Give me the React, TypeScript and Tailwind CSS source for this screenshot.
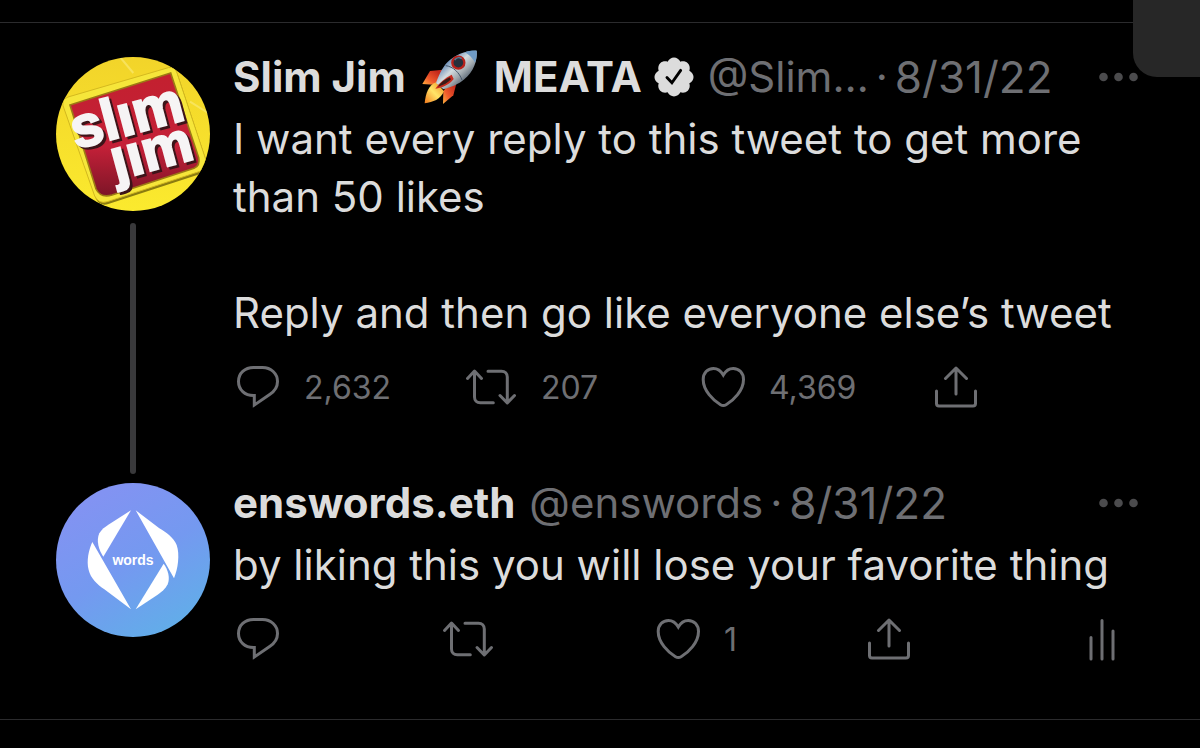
import React from 'react';

type IconProps = { className?: string };

const strokeProps = {
  fill: 'none',
  stroke: 'currentColor',
  strokeWidth: 3,
  strokeLinecap: 'round' as const,
  strokeLinejoin: 'round' as const,
};

const ReplyIcon: React.FC = () => (
  <svg width="44" height="44" viewBox="0 0 44 44" {...strokeProps} strokeLinejoin="miter" aria-hidden="true">
    <path d="M17.500 1.500h9c8.500 0 15 6 15 14 0 5.500-2.700 9.500-7.500 12.700L18.300 39V29.500h-.8C8.800 29.500 2.500 23.700 2.500 15.500S8.800 1.500 17.500 1.500z" />
  </svg>
);

const RetweetIcon: React.FC = () => (
  <svg width="52" height="44" viewBox="0 0 52 44" {...strokeProps} aria-hidden="true">
    <path d="M2.500 12.500 9.500 5l7 7.500M9.500 5.500V31c0 3.500 2.300 5.800 5.800 5.800h13M23 5.200h13.500c3.500 0 5.800 2.300 5.800 5.800v25.500M35 29.500l7.300 7.500 7.200-7.500" />
  </svg>
);

const HeartIcon: React.FC = () => (
  <svg width="44" height="44" viewBox="0 0 44 44" {...strokeProps} strokeLinejoin="miter" aria-hidden="true">
    <path d="M22.300 9C20 5 16.500 2.400 12.500 2.400 6.500 2.400 2.200 7 2.200 13.500c0 11 10 21 17.300 25.200 2 1.100 3.600 1.100 5.600 0 7.400-4.200 17.400-14.200 17.400-25.200 0-6.500-4.300-11.100-10.300-11.100-4 0-7.600 2.600-9.900 6.600z" />
  </svg>
);

const ShareIcon: React.FC = () => (
  <svg width="44" height="44" viewBox="0 0 44 44" {...strokeProps} aria-hidden="true">
    <path d="M22 2v26M11.500 12.500 22 2l10.500 10.500M2.500 25v12.500c0 1.500 1 2.500 2.500 2.500h34c1.500 0 2.500-1 2.500-2.500V25" />
  </svg>
);

const AnalyticsIcon: React.FC = () => (
  <svg width="28" height="44" viewBox="0 0 28 44" {...strokeProps} aria-hidden="true">
    <path d="M3 19.500V41M14 2.500V41M25 13v28" />
  </svg>
);

const MoreIcon: React.FC = () => (
  <svg width="40" height="10" viewBox="0 0 40 10" fill="currentColor" aria-hidden="true">
    <circle cx="5.500" cy="5" r="4.300" />
    <circle cx="20.500" cy="5" r="4.300" />
    <circle cx="35.500" cy="5" r="4.300" />
  </svg>
);

const VerifiedBadge: React.FC<IconProps> = ({ className }) => (
  <svg className={className} width="40" height="40" viewBox="1.500 1.500 21 21" role="img" aria-label="Verified">
    <path
      fill="currentColor"
      d="M22.250 12c0-1.430-.88-2.670-2.190-3.340.46-1.390.2-2.900-.81-3.910s-2.520-1.270-3.910-.81c-.66-1.310-1.910-2.190-3.340-2.190s-2.670.88-3.330 2.190c-1.400-.46-2.910-.2-3.920.81s-1.260 2.520-.8 3.910c-1.310.67-2.200 1.910-2.200 3.340s.89 2.670 2.200 3.340c-.46 1.390-.21 2.900.8 3.910s2.520 1.260 3.910.81c.67 1.310 1.910 2.190 3.340 2.190s2.680-.88 3.340-2.190c1.390.45 2.900.2 3.910-.81s1.270-2.520.81-3.910c1.310-.67 2.190-1.910 2.190-3.340z"
    />
    <path d="m8.300 12.300 2.600 2.700 4.600-6.500" fill="none" stroke="#000" strokeWidth="1.500" strokeLinecap="round" />
  </svg>
);

const Rocket: React.FC<IconProps> = ({ className }) => (
  <svg className={className} width="56" height="54" viewBox="30 15 168 162" role="img" aria-label="Rocket">
    <defs>
      <linearGradient id="hull" x1="0" y1="0" x2="1" y2="1">
        <stop offset="0.200" stopColor="#3f6da8" />
        <stop offset="0.450" stopColor="#d3dcdf" />
        <stop offset="0.600" stopColor="#a3abb0" />
        <stop offset="0.850" stopColor="#28384c" />
      </linearGradient>
      <linearGradient id="fin" x1="1" y1="0" x2="0" y2="1">
        <stop offset="0.200" stopColor="#c3281b" />
        <stop offset="0.650" stopColor="#ef5a2c" />
        <stop offset="1" stopColor="#ffb13d" />
      </linearGradient>
      <linearGradient id="flame" x1="1" y1="0" x2="0" y2="1">
        <stop offset="0" stopColor="#f08a1c" />
        <stop offset="0.500" stopColor="#ffe568" />
        <stop offset="1" stopColor="#f37a1b" />
      </linearGradient>
    </defs>
    <path d="M93 74 54 78 31 117l34 2 22-18z" fill="url(#fin)" />
    <path d="M136 105 124 151l-31 26 1-38 17-25z" fill="url(#fin)" />
    <path d="M72 112c-22 9-31 32-34 63 25-3 48-12 58-36z" fill="url(#flame)" />
    <path d="M194 17c-34-1-65 12-88 35-17 18-27 44-34 62l22 19c22-6 46-15 63-30 28-24 40-56 37-86z" fill="url(#hull)" />
    <path d="M194 17c-13-1-25 1-36 5 11 5 24 17 31 31 5-12 6-24 5-36z" fill="#6f9bc5" />
    <path d="M101 62c22 2 42 22 49 43" fill="none" stroke="#46566a" strokeWidth="3" />
    <circle cx="139" cy="53" r="18" fill="#26303c" stroke="#b7221b" strokeWidth="7" />
    <path d="M128 45c5-7 14-9 21-4" fill="none" stroke="#587996" strokeWidth="4" />
    <path d="M119 89c-20 10-36 23-49 42 21-3 43-12 55-29z" fill="#c72b1e" />
    <path d="M113 97c-16 7-27 16-35 28 16-4 31-12 39-22z" fill="#3a1b18" />
  </svg>
);

const SlimJimAvatar: React.FC = () => (
  <svg className="size-[154px] shrink-0" viewBox="48 36 462 462" role="img" aria-label="Slim Jim avatar">
    <defs>
      <clipPath id="sjClip">
        <circle cx="279" cy="267" r="231" />
      </clipPath>
      <linearGradient id="sjYellow" x1="0" y1="0" x2="0" y2="1">
        <stop offset="0" stopColor="#f2d42a" />
        <stop offset="1" stopColor="#fbea2e" />
      </linearGradient>
      <linearGradient id="sjRed" x1="0" y1="0" x2="0" y2="1">
        <stop offset="0" stopColor="#c3202f" />
        <stop offset="0.600" stopColor="#c42038" />
        <stop offset="1" stopColor="#7d1527" />
      </linearGradient>
    </defs>
    <g clipPath="url(#sjClip)">
      <rect x="48" y="36" width="462" height="462" fill="url(#sjYellow)" />
      <path d="M240 36 280 84M450 170l80 50" stroke="#fbef8c" strokeWidth="6" opacity="0.500" />
      <path d="M84 156 385 68q20-4 26 16l87 262q6 24-18 33L202 470q-26 8-38-17L69 182q-4-19 15-26z" fill="#8b7c10" transform="translate(3 7)" />
      <path d="M84 156 385 68q20-4 26 16l87 262q6 24-18 33L202 470q-26 8-38-17L69 182q-4-19 15-26z" fill="#f6e63a" stroke="#d4b91f" strokeWidth="3" />
      <path d="M90 180 392 84l84 254q5 24-14 32L216 450q-34 10-48-18z" fill="url(#sjRed)" stroke="#9c7a14" strokeWidth="5" />
    </g>
    <g fontFamily="'Liberation Sans', sans-serif" fontWeight="700" fontSize="172" strokeWidth="7">
      <g fill="#3d1419" stroke="#3d1419" transform="translate(8 7)">
        <text transform="translate(108 312) rotate(-15)">slım</text>
        <text transform="translate(228 405) rotate(-15)">ȷım</text>
      </g>
      <g fill="#f6f4f5" stroke="#f6f4f5">
        <text transform="translate(108 312) rotate(-15)">slım</text>
        <text transform="translate(228 405) rotate(-15)">ȷım</text>
      </g>
    </g>
  </svg>
);

const EnsAvatar: React.FC = () => (
  <svg className="size-[154px] shrink-0" viewBox="48 40 462 462" role="img" aria-label="enswords.eth avatar">
    <defs>
      <linearGradient id="ens" x1="0.250" y1="0.100" x2="0.750" y2="0.950">
        <stop offset="0" stopColor="#8293f2" />
        <stop offset="0.500" stopColor="#7499f0" />
        <stop offset="1" stopColor="#62ade9" />
      </linearGradient>
    </defs>
    <circle cx="279" cy="271" r="231" fill="url(#ens)" />
    <g fill="#fff">
      <path d="M273 122 190 261c-14-20-22-48-12-70 6-12 18-20 27-26z" />
      <path d="M287 122 402 326c12-28 18-72 8-100-9-22-32-38-52-50z" />
      <path d="M287 419 371 282c13 18 20 42 12 62-7 15-18 23-30 31z" />
      <path d="M273 419 157 217c-11 24-18 56-11 84 6 25 26 44 47 58z" />
      <text x="279" y="286" textAnchor="middle" fontFamily="'Liberation Sans', sans-serif" fontWeight="700" fontSize="42">
        words
      </text>
    </g>
  </svg>
);

interface ActionProps {
  label: string;
  count?: string;
  children: React.ReactNode;
}

const Action: React.FC<ActionProps> = ({ label, count, children }) => (
  <button type="button" aria-label={label} className="flex items-center gap-6 text-left">
    {children}
    {count && <span className="text-[32px] leading-[44px]">{count}</span>}
  </button>
);

interface TweetProps {
  avatar: React.ReactNode;
  name: React.ReactNode;
  handle: string;
  date: string;
  threaded?: boolean;
  children: React.ReactNode;
}

const Tweet: React.FC<TweetProps> = ({ avatar, name, handle, date, threaded, children }) => (
  <article className="flex gap-[23px]">
    <div className="flex shrink-0 flex-col items-center gap-3 pt-[9px]">
      {avatar}
      {threaded && <div className="w-1.5 flex-1 rounded-full bg-[#39393b]" />}
    </div>
    <div className={threaded ? 'min-w-0 flex-1 pb-16' : 'min-w-0 flex-1'}>
      <header className="flex items-center justify-between text-[42px] leading-[58px]">
        <div className="flex items-center gap-3.5 whitespace-nowrap text-[#6e6f73]">
          <h2 className="flex items-center font-bold text-[#dcdcdc]">{name}</h2>
          <div className="flex items-center gap-[7px]">
            <span>{handle}</span>
            <span>·</span>
            <time className="text-[44px]">{date}</time>
          </div>
        </div>
        <button type="button" aria-label="More" className="text-[#4b4b4d]">
          <MoreIcon />
        </button>
      </header>
      {children}
    </div>
  </article>
);

const App: React.FC = () => {
  return (
    <main className="relative min-h-screen overflow-hidden bg-black pt-[22px] font-['Inter',sans-serif]">
      <div className="absolute top-0 right-0 h-[77px] w-[67px] rounded-bl-3xl bg-[#272727]" />

      <section className="border-y border-[#2b2b2d] pt-[25px] pr-[62px] pb-[57px] pl-14">
        <Tweet
          threaded
          avatar={<SlimJimAvatar />}
          name={
            <>
              Slim Jim
              <Rocket className="mx-4" />
              MEATA
              <VerifiedBadge className="ml-3" />
            </>
          }
          handle="@Slim…"
          date="8/31/22"
        >
          <p className="mt-1 text-[42px] leading-[58px] whitespace-pre-line text-[#dcdcdc]">
            {'I want every reply to this tweet to get more than 50 likes\n\nReply and then go like everyone else’s tweet'}
          </p>
          <div className="mt-6 grid grid-cols-[229fr_236fr_233fr_204fr] pl-[3px] text-[#6e6f73]">
            <Action label="Reply" count="2,632"><ReplyIcon /></Action>
            <Action label="Retweet" count="207"><RetweetIcon /></Action>
            <Action label="Like" count="4,369"><HeartIcon /></Action>
            <Action label="Share"><ShareIcon /></Action>
          </div>
        </Tweet>

        <Tweet avatar={<EnsAvatar />} name="enswords.eth" handle="@enswords" date="8/31/22">
          <p className="mt-1 text-[42px] leading-[58px] text-[#dcdcdc]">
            by liking this you will lose your favorite thing
          </p>
          <div className="mt-6 grid grid-cols-[206fr_214fr_211fr_221fr_50fr] pl-[3px] text-[#6e6f73]">
            <Action label="Reply"><ReplyIcon /></Action>
            <Action label="Retweet"><RetweetIcon /></Action>
            <Action label="Like" count="1"><HeartIcon /></Action>
            <Action label="Share"><ShareIcon /></Action>
            <Action label="View analytics"><AnalyticsIcon /></Action>
          </div>
        </Tweet>
      </section>
    </main>
  );
};

export default App;
